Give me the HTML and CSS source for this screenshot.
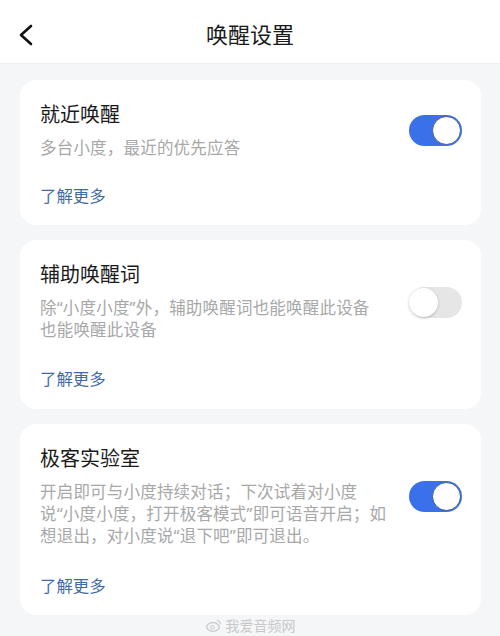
FILE: index.html
```html
<!DOCTYPE html>
<html lang="zh-CN">
<head>
<meta charset="utf-8">
<link rel="stylesheet" href="styles.css">
</head>
<body>
<div class="page">
  <header class="header">
    <svg class="back" width="16" height="22" viewBox="0 0 16 22"><path d="M13 2 L3 11 L13 20" fill="none" stroke="#111" stroke-width="2.6" stroke-linecap="round" stroke-linejoin="round"/></svg>
    <div class="title">唤醒设置</div>
  </header>
  <main class="list">
    <section class="card c1">
      <div class="row">
        <div class="text">
          <div class="name">就近唤醒</div>
          <div class="desc">多台小度，最近的优先应答</div>
        </div>
        <div class="switch on"><span class="knob"></span></div>
      </div>
      <div class="link">了解更多</div>
    </section>
    <section class="card c2">
      <div class="row">
        <div class="text">
          <div class="name">辅助唤醒词</div>
          <div class="desc">除“小度小度”外，辅助唤醒词也能唤醒此设备<br>也能唤醒此设备</div>
        </div>
        <div class="switch off"><span class="knob"></span></div>
      </div>
      <div class="link">了解更多</div>
    </section>
    <section class="card c3">
      <div class="row">
        <div class="text">
          <div class="name">极客实验室</div>
          <div class="desc">开启即可与小度持续对话；下次试着对小度<br>说“小度小度，打开极客模式”即可语音开启；如<br>想退出，对小度说“退下吧”即可退出。</div>
        </div>
        <div class="switch on"><span class="knob"></span></div>
      </div>
      <div class="link">了解更多</div>
    </section>
    <div class="mark">
      <svg width="16" height="13" viewBox="0 0 16 13"><ellipse cx="7" cy="8" rx="6.3" ry="4.3" fill="none" stroke="#c8c8c8" stroke-width="1.2"/><circle cx="6.5" cy="8.3" r="1.8" fill="none" stroke="#c8c8c8" stroke-width="1"/><path d="M11 1.5 a3.5 3.5 0 0 1 3.5 3.5" fill="none" stroke="#c8c8c8" stroke-width="1.1"/></svg>
      <span>我爱音频网</span>
    </div>
  </main>
</div>
</body>
</html>
```
FILE: styles.css
```css
* { box-sizing: border-box; }
html, body { margin: 0; padding: 0; }
body {
  width: 500px;
  height: 636px;
  overflow: hidden;
  background: #f5f6f8;
  font-family: "Noto Sans CJK SC", "Noto Sans", sans-serif;
}
.page { width: 500px; }
.header {
  position: relative;
  height: 64px;
  background: #fff;
  border-bottom: 1px solid #eef0f2;
  display: flex;
  align-items: center;
  justify-content: center;
}
.back { position: absolute; left: 18px; top: 24px; }
.title {
  font-size: 22px;
  color: #1a1a1a;
  line-height: 1;
  margin-top: 2px;
}
.list {
  padding: 16px 19px 0 20px;
  display: flex;
  flex-direction: column;
  gap: 15px;
}
.card {
  background: #fff;
  border-radius: 16px;
  padding: 21px 19px 0 20px;
}
.c1 { height: 145px; }
.c2 { height: 169px; }
.c3 { height: 191px; }
.row {
  display: flex;
  align-items: flex-start;
  justify-content: space-between;
}
.name {
  font-size: 20px;
  line-height: 26px;
  color: #1a1a1a;
}
.desc {
  margin-top: 10px;
  font-family: "Noto Sans", "Noto Sans CJK SC", sans-serif;
  font-size: 16.5px;
  letter-spacing: 0.2px;
  line-height: 22px;
  color: #a8a8a8;
  white-space: nowrap;
}
.link {
  margin-top: 25px;
  font-size: 16.4px;
  line-height: 22px;
  color: #3f6aa6;
}
.c2 .link { margin-top: 26px; }
.c3 .link { margin-top: 27px; }
.switch {
  position: relative;
  width: 53px;
  height: 31px;
  border-radius: 16px;
  flex: none;
  margin-top: 14px;
}
.c2 .switch { margin-top: 26px; }
.c3 .switch { margin-top: 36px; }
.switch.on { background: #3a70ea; }
.switch.off { background: #e6e6e6; }
.knob {
  position: absolute;
  top: 1px;
  width: 29px;
  height: 29px;
  border-radius: 50%;
  background: #fff;
}
.on .knob { right: 1px; border: 1px solid #3c5a92; }
.off .knob { left: 0; top: 1px; box-shadow: 0 1px 3px rgba(0,0,0,0.22); }
.mark {
  display: flex;
  align-items: center;
  justify-content: center;
  gap: 4px;
  margin-top: -14px;
  color: #c8c8c8;
  font-size: 14px;
  line-height: 18px;
}
```
